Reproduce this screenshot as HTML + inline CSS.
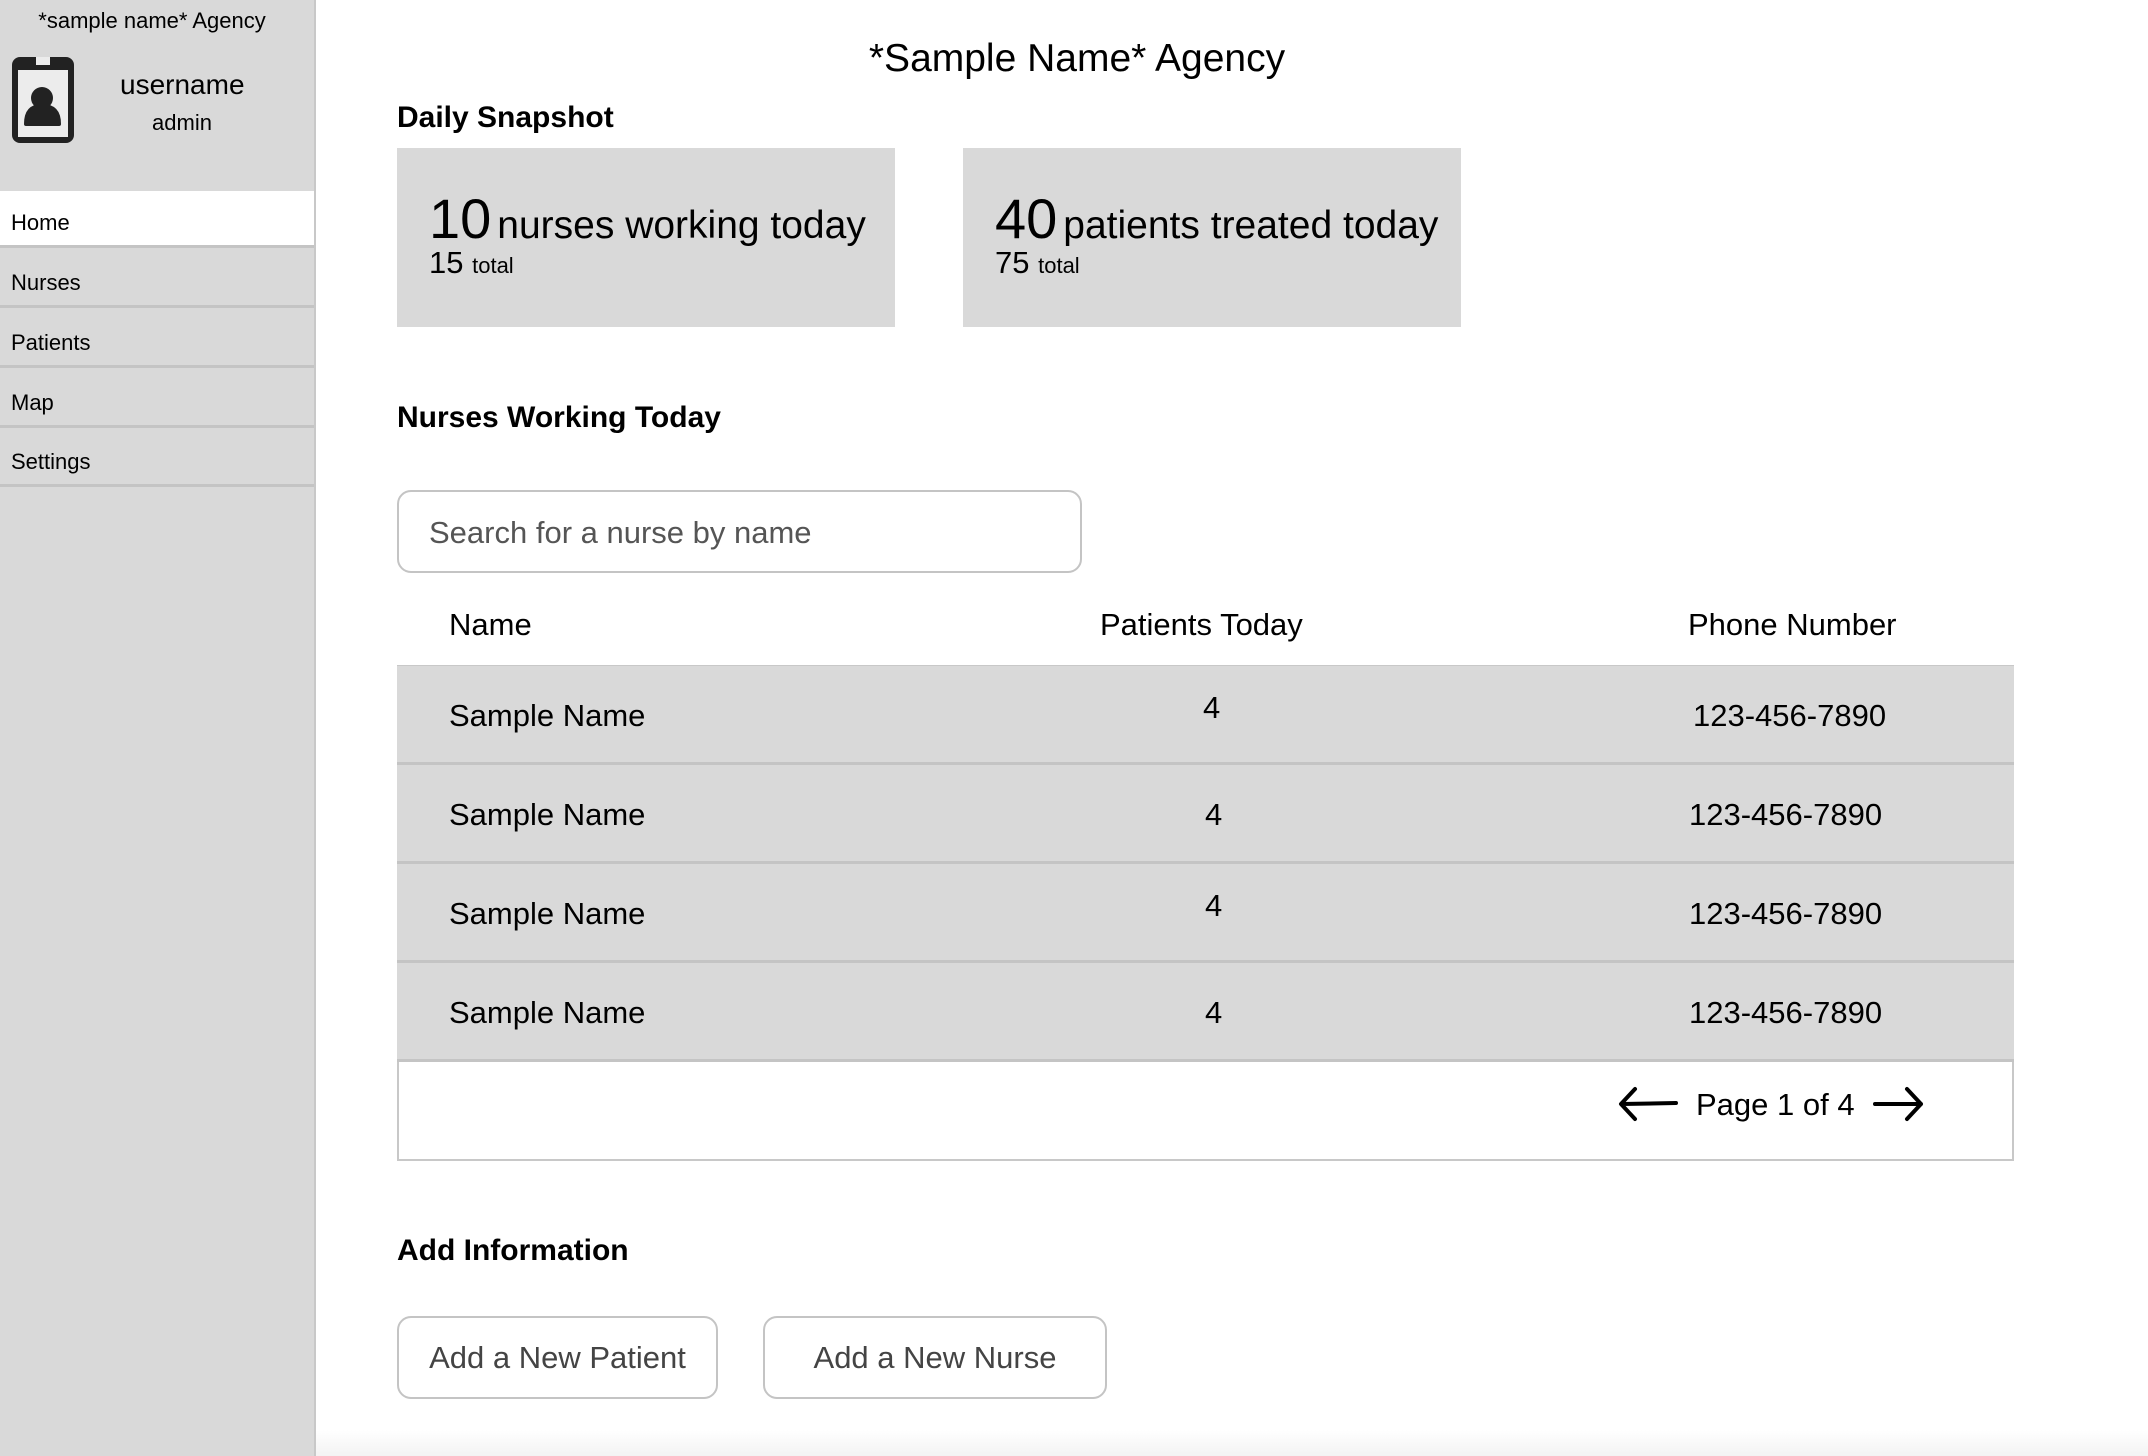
<!DOCTYPE html>
<html><head><meta charset="utf-8"><style>
*{margin:0;padding:0;box-sizing:border-box}
body{width:2148px;height:1456px;position:relative;overflow:hidden;background:#fff;font-family:"Liberation Sans",sans-serif;color:#000}
.abs{position:absolute;white-space:nowrap}
#side{position:absolute;left:0;top:0;width:316px;height:1456px;background:#d9d9d9;border-right:2px solid #c8c8c8}
.nav{position:absolute;left:0;width:314px;height:57px;border-bottom:3px solid #c4c4c4;font-size:22px;padding-left:11px;line-height:63px}
.card{position:absolute;top:148px;width:498px;height:179px;background:#d9d9d9}
.big{font-size:56px}
.mid{font-size:39px;margin-left:6px}
.row{position:absolute;left:397px;width:1617px;height:99px;background:#d9d9d9;border-bottom:3px solid #c4c4c4;font-size:31px}
.row span{position:absolute;top:32px}
h2{position:absolute;font-size:30px;font-weight:bold;white-space:nowrap}
.btn{position:absolute;top:1316px;height:83px;border:2px solid #c4c4c4;border-radius:14px;font-size:31px;color:#444;line-height:79px;text-align:center}
</style></head><body>
<div id="side">
<div class="abs" style="left:0;width:304px;text-align:center;top:8px;font-size:22px">*sample name* Agency</div>
<svg class="abs" style="left:12px;top:57px" width="62" height="86" viewBox="0 0 62 86">
<rect x="0" y="0" width="62" height="86" rx="8" fill="#222"/>
<rect x="6" y="13" width="50" height="67" fill="#ececec"/>
<rect x="24" y="0" width="14" height="8" fill="#ececec"/>
<circle cx="30" cy="41" r="11" fill="#222"/>
<path d="M12 67 Q12 47 30 47 Q49 47 49 67 Q49 69 47 69 L14 69 Q12 69 12 67Z" fill="#222"/>
</svg>
<div class="abs" style="left:120px;width:124px;text-align:center;top:69px;font-size:28px">username</div>
<div class="abs" style="left:120px;width:124px;text-align:center;top:110px;font-size:22px">admin</div>
<div class="nav" style="top:191px;background:#fff">Home</div>
<div class="nav" style="top:251px">Nurses</div>
<div class="nav" style="top:311px">Patients</div>
<div class="nav" style="top:371px">Map</div>
<div class="nav" style="top:430px">Settings</div>
</div>

<div class="abs" style="left:300px;width:1554px;text-align:center;top:37px;font-size:39px">*Sample Name* Agency</div>
<h2 style="left:397px;top:101px">Daily Snapshot</h2>
<div class="card" style="left:397px">
<div class="abs" style="left:32px;top:38px"><span class="big">10</span><span class="mid">nurses working today</span></div>
<div class="abs" style="left:32px;top:97px;font-size:31px">15 <span style="font-size:22px">total</span></div>
</div>
<div class="card" style="left:963px">
<div class="abs" style="left:32px;top:38px"><span class="big">40</span><span class="mid">patients treated today</span></div>
<div class="abs" style="left:32px;top:97px;font-size:31px">75 <span style="font-size:22px">total</span></div>
</div>

<h2 style="left:397px;top:401px">Nurses Working Today</h2>
<div class="abs" style="left:397px;top:490px;width:685px;height:83px;border:2px solid #c4c4c4;border-radius:14px;font-size:31px;color:#555;padding-left:30px;line-height:81px">Search for a nurse by name</div>

<div class="abs" style="left:449px;top:607px;font-size:31px">Name</div>
<div class="abs" style="left:1100px;top:607px;font-size:31px">Patients Today</div>
<div class="abs" style="left:1688px;top:607px;font-size:31px">Phone Number</div>

<div class="abs" style="left:397px;top:665px;width:1617px;height:496px;border:2px solid #c8c8c8"></div>
<div class="row" style="top:666px"><span style="left:52px">Sample Name</span><span style="left:806px;top:24px">4</span><span style="left:1296px">123-456-7890</span></div>
<div class="row" style="top:765px"><span style="left:52px">Sample Name</span><span style="left:808px">4</span><span style="left:1292px">123-456-7890</span></div>
<div class="row" style="top:864px"><span style="left:52px">Sample Name</span><span style="left:808px;top:24px">4</span><span style="left:1292px">123-456-7890</span></div>
<div class="row" style="top:963px"><span style="left:52px">Sample Name</span><span style="left:808px">4</span><span style="left:1292px">123-456-7890</span></div>

<svg class="abs" style="left:1617px;top:1086px" width="62" height="36" viewBox="0 0 62 36"><path d="M59 17 L5 18 M18 3 L4 18 L18 33" stroke="#000" stroke-width="4" fill="none" stroke-linecap="round" stroke-linejoin="round"/></svg>
<div class="abs" style="left:1696px;top:1087px;font-size:31px">Page 1 of 4</div>
<svg class="abs" style="left:1872px;top:1086px" width="54" height="36" viewBox="0 0 54 36"><path d="M3 18 L49 18 M35 3 L49 18 L35 33" stroke="#000" stroke-width="4" fill="none" stroke-linecap="round" stroke-linejoin="round"/></svg>

<h2 style="left:397px;top:1234px">Add Information</h2>
<div class="btn" style="left:397px;width:321px">Add a New Patient</div>
<div class="btn" style="left:763px;width:344px">Add a New Nurse</div>
<div class="abs" style="left:316px;top:1430px;width:1832px;height:26px;background:linear-gradient(#fff,#f3f3f3)"></div>
</body></html>
